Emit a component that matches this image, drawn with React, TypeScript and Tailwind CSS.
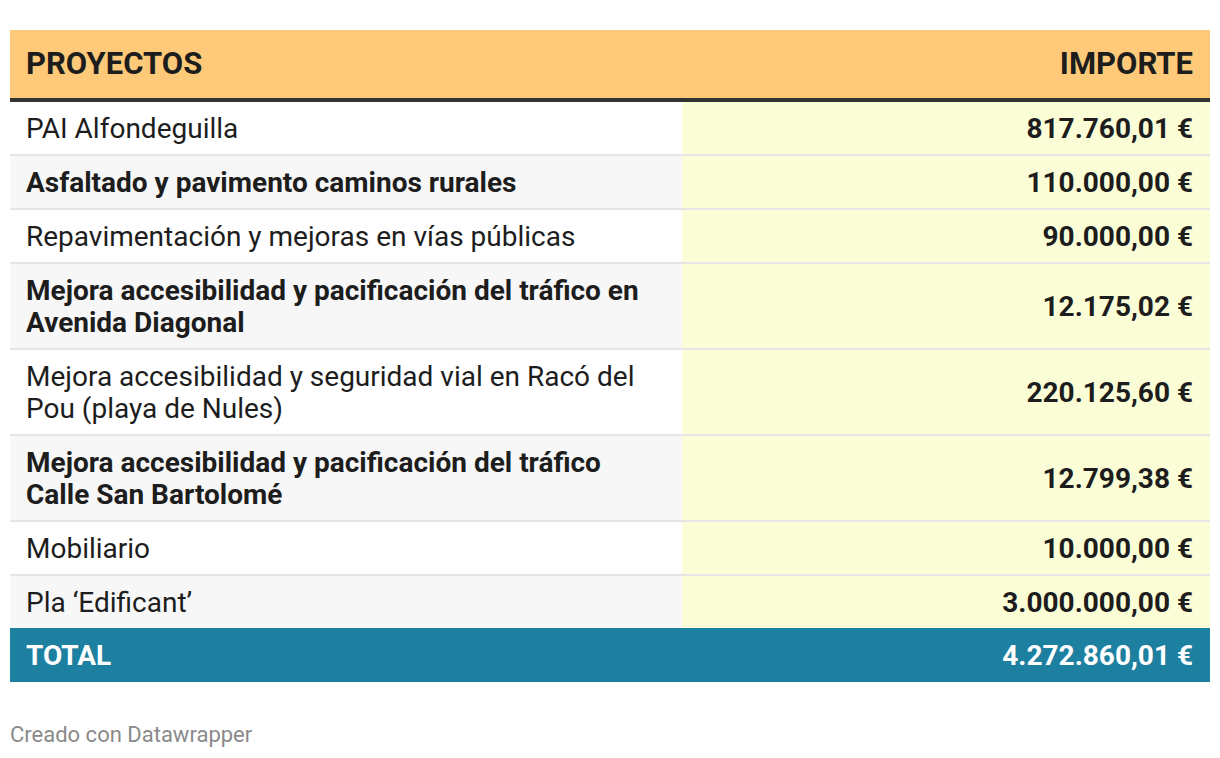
const rows: { name: string; amount: string; bold?: boolean }[] = [
  { name: "PAI Alfondeguilla", amount: "817.760,01 €" },
  { name: "Asfaltado y pavimento caminos rurales", amount: "110.000,00 €", bold: true },
  { name: "Repavimentación y mejoras en vías públicas", amount: "90.000,00 €" },
  {
    name: "Mejora accesibilidad y pacificación del tráfico en Avenida Diagonal",
    amount: "12.175,02 €",
    bold: true,
  },
  {
    name: "Mejora accesibilidad y seguridad vial en Racó del Pou (playa de Nules)",
    amount: "220.125,60 €",
  },
  {
    name: "Mejora accesibilidad y pacificación del tráfico Calle San Bartolomé",
    amount: "12.799,38 €",
    bold: true,
  },
  { name: "Mobiliario", amount: "10.000,00 €" },
  { name: "Pla ‘Edificant’", amount: "3.000.000,00 €" },
];

export default function App() {
  return (
    <div className="min-h-[758px] bg-white px-[10px] pt-[30px] font-['Roboto',sans-serif] text-[#1d1d1d]">
      <div className="w-[1200px]">
        <div className="grid h-[72px] grid-cols-[672px_528px] border-b-[4px] border-[#333] bg-[#fec978] text-[31px] font-bold leading-[36px]">
          <div className="flex items-center px-[16px]">PROYECTOS</div>
          <div className="flex items-center justify-end px-[17px]">IMPORTE</div>
        </div>

        {rows.map((r, i) => (
          <div
            key={r.name}
            className={
              "grid grid-cols-[672px_528px] text-[28px] leading-[32px] " +
              (i < rows.length - 1 ? "border-b-2 border-[#e6e6e6]" : "")
            }
          >
            <div
              className={
                "flex items-center pt-[11px] pb-[9px] pl-[16px] pr-[30px] " +
                (i % 2 === 1 ? "bg-[#f7f7f7] " : "bg-white ") +
                (r.bold ? "font-bold" : "")
              }
            >
              {r.name}
            </div>
            <div className="flex items-center justify-end bg-[#fbfdd7] px-[17px] pt-[2px] font-bold">
              {r.amount}
            </div>
          </div>
        ))}

        <div className="grid h-[54px] grid-cols-[672px_528px] bg-[#1e80a0] pt-[2px] text-[28px] font-bold leading-[32px] text-white">
          <div className="flex items-center px-[16px]">TOTAL</div>
          <div className="flex items-center justify-end px-[17px]">4.272.860,01 €</div>
        </div>
      </div>

      <p className="mt-[41px] text-[22px] leading-[24px] text-[#8a8a8a]">Creado con Datawrapper</p>
    </div>
  );
}
